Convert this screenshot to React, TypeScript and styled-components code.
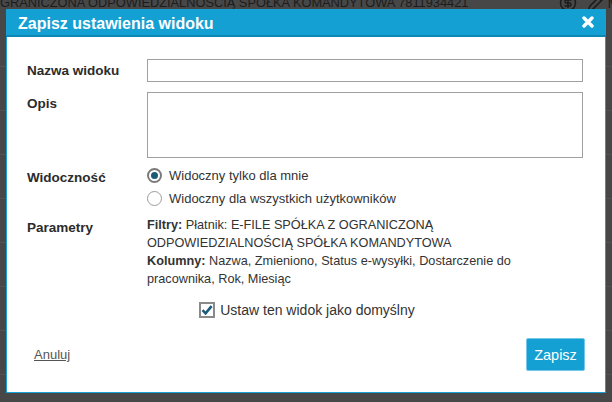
import React from 'react';
import styled, { createGlobalStyle } from 'styled-components';
import { CircleDollarSign, Pencil } from 'lucide-react';

const GlobalStyle = createGlobalStyle`
  html, body {
    margin: 0;
    padding: 0;
    background: #474747;
    overflow: hidden;
  }
  body {
    font-family: "Liberation Sans", Arial, sans-serif;
  }
`;

const Page = styled.div`
  height: 402px;
  color: #1c1c1c;
  font-size: 13px;
`;

const PageHeader = styled.div`
  display: flex;
  align-items: center;
  justify-content: space-between;
  height: 16px;
  line-height: 16px;
  margin-top: -5px;
  white-space: nowrap;
  overflow: hidden;
`;

const HeaderTitle = styled.span`
  margin-left: -10px;
  font-size: 12.8px;
`;

const HeaderTools = styled.div`
  display: flex;
  align-items: center;
  margin-right: -8px;
  color: #1c1c1c;

  svg + svg {
    margin-left: 10px;
  }

  span {
    margin-left: 3px;
    font-size: 15px;
  }
`;

const Rows = styled.div`
  margin-top: 12px;
`;

const Row = styled.div`
  height: 43px;
  border-bottom: 1px solid #525252;
`;

const Dialog = styled.div`
  position: fixed;
  top: 9px;
  left: 6px;
  width: 600px;
  box-sizing: border-box;
  background: #fff;
  border: 1px solid #17a0d4;
  border-top: none;
  font-family: "Liberation Sans", Arial, sans-serif;
  color: #2e2e2e;
`;

const TitleBar = styled.div`
  display: flex;
  align-items: center;
  justify-content: space-between;
  box-sizing: border-box;
  height: 28px;
  margin: 0 -1px;
  padding: 3px 12px 0 12px;
  background: #15a0d3;
  border-bottom: 2px solid #0e87b5;
  color: #fff;
`;

const Title = styled.h1`
  margin: 0;
  font-size: 16px;
  font-weight: bold;
  line-height: 23px;
`;

const CloseButton = styled.button`
  display: flex;
  padding: 0;
  margin-top: -3px;
  border: none;
  background: none;
  cursor: pointer;
`;

const Body = styled.div`
  padding: 22px 22px 0 20px;
`;

const Field = styled.div<{ $spaced?: boolean; $center?: boolean }>`
  display: grid;
  grid-template-columns: 120px 1fr;
  align-items: ${({ $center }) => ($center ? 'center' : 'start')};
  margin-bottom: ${({ $spaced }) => ($spaced ? '10px' : '6px')};
`;

const Label = styled.label<{ $offset?: number }>`
  font-size: 13.5px;
  font-weight: bold;
  line-height: 18px;
  color: #2b2b2b;
  padding-top: ${({ $offset }) => $offset ?? 0}px;
`;

const TextInput = styled.input`
  box-sizing: border-box;
  width: 100%;
  height: 23px;
  margin: 0;
  border: 1px solid #a0a0a0;
  font: inherit;
`;

const TextArea = styled.textarea`
  display: block;
  box-sizing: border-box;
  width: 100%;
  height: 66px;
  margin: 0;
  border: 1px solid #a0a0a0;
  resize: none;
  font: inherit;
`;

const Options = styled.div`
  display: flex;
  flex-direction: column;
`;

const Option = styled.label`
  display: flex;
  align-items: center;
  gap: 7px;
  height: 23px;
  font-size: 13px;
  color: #333;
`;

const RadioCircle = styled.span<{ $checked?: boolean }>`
  display: flex;
  align-items: center;
  justify-content: center;
  box-sizing: border-box;
  width: 15px;
  height: 15px;
  border-radius: 50%;
  border: ${({ $checked }) => ($checked ? '2px solid #7b7b7b' : '1.5px solid #9c9c9c')};
  background: #fff;

  &::after {
    content: '';
    display: ${({ $checked }) => ($checked ? 'block' : 'none')};
    width: 7px;
    height: 7px;
    border-radius: 50%;
    background: #1b5a7a;
  }
`;

const Params = styled.div`
  max-width: 420px;
  font-size: 12.7px;
  line-height: 18px;
  color: #333;
`;

const CheckRow = styled.label`
  display: flex;
  justify-content: center;
  align-items: center;
  gap: 5px;
  margin-top: 12px;
  padding-left: 4px;
  height: 20px;
  font-size: 14px;
  color: #333;
`;

const CheckBox = styled.span`
  display: flex;
  align-items: center;
  justify-content: center;
  box-sizing: border-box;
  width: 16px;
  height: 16px;
  border: 2px solid #8a8a8a;
  background: #fff;
`;

const Footer = styled.div`
  display: flex;
  align-items: center;
  justify-content: space-between;
  margin-top: 18px;
  padding: 0 20px 21px 27px;
`;

const CancelLink = styled.a`
  font-size: 13px;
  color: #555;
  text-decoration: underline;
  cursor: pointer;
`;

const SaveButton = styled.button`
  box-sizing: border-box;
  width: 59px;
  height: 33px;
  padding: 0;
  border: 1px solid #74c7e8;
  border-radius: 2px;
  background: #15a0d3;
  color: #fff;
  font-family: "Liberation Sans", Arial, sans-serif;
  font-size: 14.5px;
  cursor: pointer;
`;

const App: React.FC = () => {
  return (
    <>
      <GlobalStyle />
      <Page>
        <PageHeader>
          <HeaderTitle>OGRANICZONA ODPOWIEDZIALNOŚCIĄ SPÓŁKA KOMANDYTOWA 7811934421</HeaderTitle>
          <HeaderTools>
            <CircleDollarSign size={18} strokeWidth={2} />
            <Pencil size={18} strokeWidth={2} />
            <span>M</span>
          </HeaderTools>
        </PageHeader>
        <Rows>
          {Array.from({ length: 9 }).map((_, i) => (
            <Row key={i} />
          ))}
        </Rows>
      </Page>

      <Dialog>
        <TitleBar>
          <Title>Zapisz ustawienia widoku</Title>
          <CloseButton aria-label="Zamknij">
            <svg width="12" height="12" viewBox="0 0 12 12">
              <path
                d="M2 2 L10 10 M10 2 L2 10"
                stroke="#fff"
                strokeWidth="3.4"
                strokeLinecap="round"
                fill="none"
              />
            </svg>
          </CloseButton>
        </TitleBar>

        <Body>
          <Field $spaced $center>
            <Label>Nazwa widoku</Label>
            <TextInput type="text" />
          </Field>
          <Field>
            <Label $offset={3}>Opis</Label>
            <TextArea />
          </Field>
          <Field>
            <Label $offset={5}>Widoczność</Label>
            <Options>
              <Option>
                <RadioCircle $checked />
                Widoczny tylko dla mnie
              </Option>
              <Option>
                <RadioCircle />
                Widoczny dla wszystkich użytkowników
              </Option>
            </Options>
          </Field>
          <Field>
            <Label $offset={3}>Parametry</Label>
            <Params>
              <b>Filtry:</b> Płatnik: E-FILE SPÓŁKA Z OGRANICZONĄ ODPOWIEDZIALNOŚCIĄ SPÓŁKA KOMANDYTOWA
              <br />
              <b>Kolumny:</b> Nazwa, Zmieniono, Status e-wysyłki, Dostarczenie do pracownika, Rok, Miesiąc
            </Params>
          </Field>
          <CheckRow>
            <CheckBox>
              <svg width="12" height="12" viewBox="0 0 12 12">
                <path
                  d="M1.5 6.2 L4.6 9.3 L10.6 2.2"
                  stroke="#1b5a7a"
                  strokeWidth="2.6"
                  fill="none"
                />
              </svg>
            </CheckBox>
            Ustaw ten widok jako domyślny
          </CheckRow>
        </Body>

        <Footer>
          <CancelLink>Anuluj</CancelLink>
          <SaveButton>Zapisz</SaveButton>
        </Footer>
      </Dialog>
    </>
  );
};

export default App;
